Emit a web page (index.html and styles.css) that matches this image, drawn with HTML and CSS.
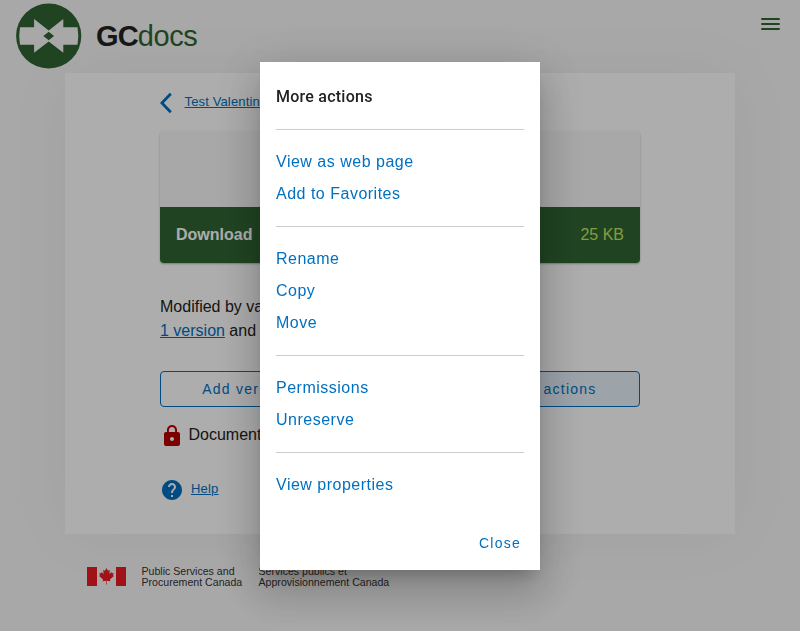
FILE: index.html
```html
<!DOCTYPE html>
<html lang="en">
<head>
<meta charset="utf-8">
<title>GCdocs</title>
<link rel="stylesheet" href="styles.css">
</head>
<body>
<header class="header">
  <svg class="logo" width="66" height="66" viewBox="0 0 66 66"><circle cx="32.700" cy="33" r="32.600" fill="#306533"/><path fill="#f8f8f8" d="M4 24.200H18.100V16L32.700 27.400 47.300 16V24.200H61.500Q63.100 33 61.500 41.700H47.300V49.700L32.700 38.600 18.100 49.700V41.700H4Q2.400 33 4 24.200Z"/><path fill="#306533" d="M27.300 33 32.700 28.700 38.100 33 32.700 37.300Z"/></svg>
  <div class="brand"><b>GC</b><span>docs</span></div>
  <svg class="burger" width="20" height="14" viewBox="0 0 20 14"><path fill="#306533" d="M.3 1H18.700V3H.3ZM.3 6H18.700V8H.3ZM.3 11H18.700V13H.3Z"/></svg>
</header>
<main class="panel">
  <nav class="crumb">
    <svg width="14" height="22" viewBox="0 0 14 22"><path d="M10.800 1.700 1.900 11 10.800 20.300" fill="none" stroke="#0070c0" stroke-width="2.800"/></svg>
    <a href="#">Test Valentin</a>
  </nav>
  <section class="file">
    <div class="preview"></div>
    <div class="download"><b>Download</b><span>25 KB</span></div>
  </section>
  <p class="info">Modified by va<br><a href="#">1 version</a> and</p>
  <div class="buttons">
    <button class="btn">Add version</button>
    <button class="btn active">More actions</button>
  </div>
  <div class="reserved">
    <svg width="24" height="24" viewBox="0 0 24 24"><path fill="#b80000" d="M18 8h-1V6c0-2.760-2.240-5-5-5S7 3.240 7 6v2H6c-1.100 0-2 .9-2 2v10c0 1.100.9 2 2 2h12c1.100 0 2-.9 2-2V10c0-1.100-.9-2-2-2zm-6 9c-1.100 0-2-.9-2-2s.9-2 2-2 2 .9 2 2-.9 2-2 2zm3.100-9H8.900V6c0-1.710 1.390-3.100 3.100-3.100s3.100 1.390 3.100 3.100v2z"/></svg>
    <span>Document</span>
  </div>
  <div class="help">
    <svg width="24" height="24" viewBox="0 0 24 24"><path fill="#0070c0" d="M12 2C6.480 2 2 6.480 2 12s4.480 10 10 10 10-4.480 10-10S17.520 2 12 2zm1 17h-2v-2h2v2zm2.070-7.750-.9.920C13.450 12.900 13 13.500 13 15h-2v-.5c0-1.100.45-2.100 1.170-2.830l1.240-1.260c.37-.36.590-.86.590-1.410 0-1.100-.9-2-2-2s-2 .9-2 2H8c0-2.210 1.790-4 4-4s4 1.790 4 4c0 .88-.36 1.680-.93 2.250z"/></svg>
    <a href="#">Help</a>
  </div>
</main>
<footer class="footer">
  <svg class="flag" width="39" height="19" viewBox="0 0 39 19"><path fill="#eb1c24" d="M0 0H10V19H0ZM29 0H39V19H29ZM19.500 1 21 3.800 22.900 3 22.200 7 24.300 5 24.800 6.200 26.700 5.900 26 8.300 26.900 9 22.900 12.600 23.300 14.200 19.800 13.700V17.500H19.200V13.700L15.700 14.200 16.100 12.600 12.100 9 13 8.300 12.300 5.900 14.200 6.200 14.700 5 16.800 7 16.100 3 18 3.800Z"/></svg>
  <div class="dept en">Public Services and<br>Procurement Canada</div>
  <div class="dept fr">Services publics et<br>Approvisionnement Canada</div>
</footer>
<div class="scrim">
  <div class="dialog" role="dialog">
    <h2>More actions</h2>
    <ul><li>View as web page</li><li>Add to Favorites</li></ul>
    <ul><li>Rename</li><li>Copy</li><li>Move</li></ul>
    <ul><li>Permissions</li><li>Unreserve</li></ul>
    <ul><li>View properties</li></ul>
    <div class="close">Close</div>
  </div>
</div>
</body>
</html>
```
FILE: styles.css
```css
* { box-sizing: border-box; }
body {
  margin: 0;
  height: 631px;
  overflow: hidden;
  background: #f8f8f8;
  color: #222;
  font: 16px/24px "Liberation Sans", Arial, sans-serif;
}
a { color: #0070c0; }
svg { display: block; flex: none; }
.header { display: flex; height: 73px; padding: 3px 19px 0 16px; }
.brand {
  margin: 15px 0 0 14px;
  font-size: 29px;
  line-height: 36px;
  color: #306533;
}
.brand b { color: #222; letter-spacing: -.9px; }
.brand span { letter-spacing: -.4px; }
.burger { margin: 14px 0 0 auto; }
.panel {
  width: 670px;
  height: 461px;
  margin: 0 auto;
  padding: 17px 95px 0;
  background: #fff;
  box-shadow: 0 0 60px rgba(0, 0, 0, .05);
}
.crumb { display: flex; gap: 10.500px; height: 41px; font-size: 13px; letter-spacing: .14px; }
.crumb svg { margin-top: 2px; }
.file {
  height: 132px;
  border-radius: 4px;
  overflow: hidden;
  background: #f8f8f8;
  box-shadow: 0 1px 2px rgba(0, 0, 0, .3);
}
.preview { height: 76px; }
.download {
  display: flex;
  align-items: center;
  justify-content: space-between;
  height: 56px;
  padding: 0 16px;
  background: #306533;
  color: #fff;
}
.download span { color: #c3e55d; }
.info { margin: 32px 0 28px; }
.buttons { display: grid; grid-template-columns: 172px 182px; justify-content: space-between; }
.btn {
  height: 36px;
  border: 1px solid #0070c0;
  border-radius: 4px;
  background: none;
  color: #0070c0;
  font: 14px "Liberation Sans", Arial, sans-serif;
  letter-spacing: 1.25px;
}
.btn.active { background: #e6f0fa; }
.reserved { display: flex; gap: 4.500px; margin-top: 16px; }
.reserved svg { margin-top: 1px; }
.help { display: flex; gap: 7px; margin-top: 29px; font-size: 13px; letter-spacing: .2px; }
.help svg { margin-top: 1px; }
.footer { display: flex; padding: 33px 87px 0; }
.dept { font-size: 10.600px; line-height: 11px; color: #333; white-space: nowrap; }
.en { width: 101px; margin: -1px 16px 0 15.500px; }
.fr { margin-top: -1px; }
.scrim {
  position: fixed;
  inset: 0;
  display: flex;
  align-items: center;
  justify-content: center;
  background: rgba(0, 0, 0, .32);
}
.dialog {
  width: 280px;
  height: 508px;
  padding: 0 16px;
  background: #fff;
  color: #0070c0;
  letter-spacing: .5px;
  box-shadow: 0 11px 15px -7px rgba(0, 0, 0, .2), 0 24px 38px 3px rgba(0, 0, 0, .14), 0 9px 46px 8px rgba(0, 0, 0, .12);
}
.dialog h2 {
  margin: 0;
  height: 67px;
  padding-top: 23px;
  color: #222;
  font: 500 16px/24px Roboto, sans-serif;
  letter-spacing: .24px;
}
.dialog ul { margin: 0; padding: 16px 0; list-style: none; border-top: 1px solid #ccc; }
.dialog li { height: 32px; line-height: 32px; }
.close { padding: 14px 3px 0; text-align: right; font-size: 14px; letter-spacing: 1.25px; }
```
